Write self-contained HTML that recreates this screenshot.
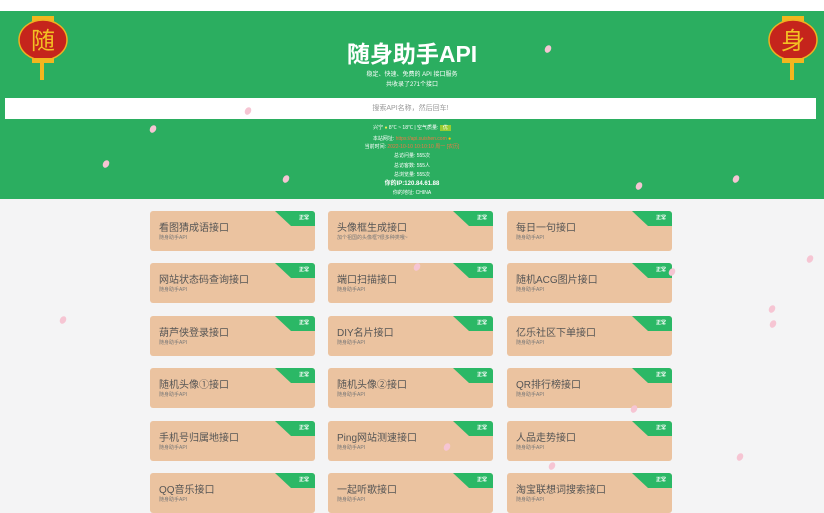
<!DOCTYPE html><html><head><meta charset="utf-8"><style>
*{margin:0;padding:0;box-sizing:border-box}
body{width:824px;height:503px;overflow:hidden;background:#f4f4f5;font-family:"Liberation Sans","Noto Sans CJK SC",sans-serif;position:relative}
.top{position:absolute;left:0;top:0;width:824px;height:11px;background:#fff}
.hd{position:absolute;left:0;top:11px;width:824px;height:188px;background:#2bae60}
.t{position:absolute;width:824px;text-align:center;color:#fff;line-height:1.2}
.search{position:absolute;left:5px;top:98px;width:811px;height:21px;background:#fff;color:#999;font-size:7px;text-align:center;line-height:21px}
.card{position:absolute;width:165px;height:40px;background:#ebc3a0;border-radius:3px;overflow:hidden}
.card b{position:absolute;left:9px;top:8px;font-weight:normal;font-size:10px;color:#555}
.card i{position:absolute;left:9px;top:23px;font-style:normal;font-size:5px;color:#777}
.card s{position:absolute;right:0;top:0;width:40px;height:15px;background:#2bb866;clip-path:polygon(0 0,100% 0,100% 100%,40% 100%);text-decoration:none}
.card u{position:absolute;right:6px;top:3px;font-size:5px;color:#fff;text-decoration:none;font-weight:bold}
.lan{position:absolute}
.p{position:absolute;width:6px;height:8px;background:#f6c5d3;border-radius:50%;transform:rotate(30deg)}
</style></head><body>
<div class="top"></div>
<div class="hd"></div>
<svg class="lan" style="left:14px;top:14px" width="60" height="68"><rect x="18" y="2" width="22" height="5" fill="#f3b61e"/><ellipse cx="29" cy="26" rx="24" ry="20" fill="#c5241c" stroke="#f0b020" stroke-width="1.5"/><rect x="18" y="44" width="22" height="5" fill="#f3b61e"/><rect x="26" y="49" width="4" height="17" fill="#f3b61e"/><text x="29" y="35" text-anchor="middle" font-size="24" fill="#f3c023" font-family="Noto Sans CJK SC">随</text></svg>
<svg class="lan" style="left:764px;top:14px" width="60" height="68"><rect x="18" y="2" width="22" height="5" fill="#f3b61e"/><ellipse cx="29" cy="26" rx="24" ry="20" fill="#c5241c" stroke="#f0b020" stroke-width="1.5"/><rect x="18" y="44" width="22" height="5" fill="#f3b61e"/><rect x="26" y="49" width="4" height="17" fill="#f3b61e"/><text x="29" y="35" text-anchor="middle" font-size="24" fill="#f3c023" font-family="Noto Sans CJK SC">身</text></svg>
<div class="t" style="top:40px;font-size:23px;font-weight:bold;line-height:28px">随身助手API</div>
<div class="t" style="top:72px;font-size:6px">稳定、快速、免费的 API 接口服务</div>
<div class="t" style="top:82px;font-size:6px">共收录了271个接口</div>
<div class="search">搜索API名称，然后回车!</div>
<div class="t" style="top:125px;font-size:5px">兴宁 <span style="color:#ee5">●</span> 8℃ ~ 18℃ | 空气质量: <span style="background:#9c3;padding:0 3px">优</span></div>
<div class="t" style="top:136px;font-size:5px">本站网址: <span style="color:#e74">https://api.suishen.com</span> <span style="color:#fc0">●</span></div>
<div class="t" style="top:144px;font-size:5px">当前时间: <span style="color:#e74">2022-10-10 10:10:10 周一 [农历]</span></div>
<div class="t" style="top:153px;font-size:5px">总访问量: 555次</div>
<div class="t" style="top:163px;font-size:5px">总访客数: 555人</div>
<div class="t" style="top:172px;font-size:5px">总浏览量: 555次</div>
<div class="t" style="top:181px;font-size:6px;font-weight:bold">你的IP:120.84.61.88</div>
<div class="t" style="top:190px;font-size:5px">你的地址: CHINA</div>
<div class="card" style="left:150px;top:211px"><b>看图猜成语接口</b><i>随身助手API</i><s></s><u>正常</u></div>
<div class="card" style="left:328px;top:211px"><b>头像框生成接口</b><i>加个祖国的头像框?很多种类哦~</i><s></s><u>正常</u></div>
<div class="card" style="left:507px;top:211px"><b>每日一句接口</b><i>随身助手API</i><s></s><u>正常</u></div>
<div class="card" style="left:150px;top:263px"><b>网站状态码查询接口</b><i>随身助手API</i><s></s><u>正常</u></div>
<div class="card" style="left:328px;top:263px"><b>端口扫描接口</b><i>随身助手API</i><s></s><u>正常</u></div>
<div class="card" style="left:507px;top:263px"><b>随机ACG图片接口</b><i>随身助手API</i><s></s><u>正常</u></div>
<div class="card" style="left:150px;top:316px"><b>葫芦侠登录接口</b><i>随身助手API</i><s></s><u>正常</u></div>
<div class="card" style="left:328px;top:316px"><b>DIY名片接口</b><i>随身助手API</i><s></s><u>正常</u></div>
<div class="card" style="left:507px;top:316px"><b>亿乐社区下单接口</b><i>随身助手API</i><s></s><u>正常</u></div>
<div class="card" style="left:150px;top:368px"><b>随机头像①接口</b><i>随身助手API</i><s></s><u>正常</u></div>
<div class="card" style="left:328px;top:368px"><b>随机头像②接口</b><i>随身助手API</i><s></s><u>正常</u></div>
<div class="card" style="left:507px;top:368px"><b>QR排行榜接口</b><i>随身助手API</i><s></s><u>正常</u></div>
<div class="card" style="left:150px;top:421px"><b>手机号归属地接口</b><i>随身助手API</i><s></s><u>正常</u></div>
<div class="card" style="left:328px;top:421px"><b>Ping网站测速接口</b><i>随身助手API</i><s></s><u>正常</u></div>
<div class="card" style="left:507px;top:421px"><b>人品走势接口</b><i>随身助手API</i><s></s><u>正常</u></div>
<div class="card" style="left:150px;top:473px"><b>QQ音乐接口</b><i>随身助手API</i><s></s><u>正常</u></div>
<div class="card" style="left:328px;top:473px"><b>一起听歌接口</b><i>随身助手API</i><s></s><u>正常</u></div>
<div class="card" style="left:507px;top:473px"><b>淘宝联想词搜索接口</b><i>随身助手API</i><s></s><u>正常</u></div>
<div class="p" style="left:545px;top:45px"></div><div class="p" style="left:103px;top:160px"></div><div class="p" style="left:150px;top:125px"></div><div class="p" style="left:283px;top:175px"></div><div class="p" style="left:636px;top:182px"></div><div class="p" style="left:733px;top:175px"></div><div class="p" style="left:807px;top:255px"></div><div class="p" style="left:770px;top:320px"></div><div class="p" style="left:769px;top:305px"></div><div class="p" style="left:737px;top:453px"></div><div class="p" style="left:414px;top:263px"></div><div class="p" style="left:60px;top:316px"></div><div class="p" style="left:444px;top:443px"></div><div class="p" style="left:549px;top:462px"></div><div class="p" style="left:669px;top:268px"></div><div class="p" style="left:245px;top:107px"></div><div class="p" style="left:631px;top:405px"></div>
</body></html>
